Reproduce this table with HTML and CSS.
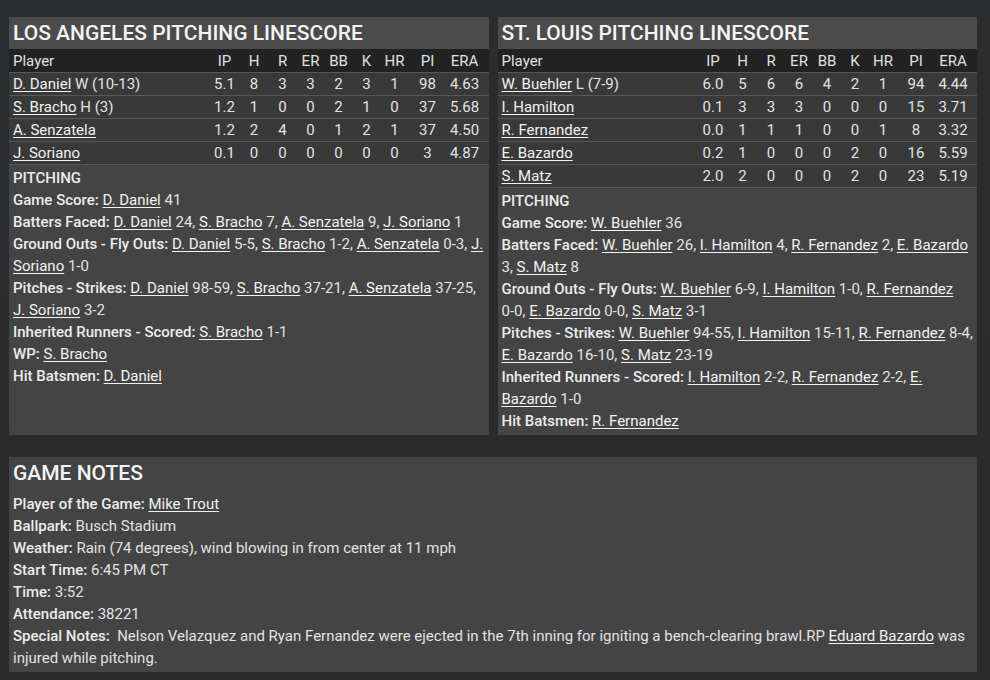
FILE: index.html
```html
<!DOCTYPE html>
<html>
<head>
<meta charset="utf-8">
<link rel="stylesheet" href="styles.css">
</head>
<body>
<div class="page">
  <div class="top-row">
    <section class="panel">
      <h2 class="panel-title">LOS ANGELES PITCHING LINESCORE</h2>
      <table class="linescore">
        <colgroup>
          <col><col class="c30"><col class="c29"><col class="c28"><col class="c28"><col class="c28"><col class="c28"><col class="c28"><col class="c38"><col class="c42">
        </colgroup>
        <thead>
          <tr><th class="player">Player</th><th>IP</th><th>H</th><th>R</th><th>ER</th><th>BB</th><th>K</th><th>HR</th><th>PI</th><th class="last">ERA</th></tr>
        </thead>
        <tbody>
          <tr><td class="player"><a href="#">D. Daniel</a> W (10-13)</td><td>5.1</td><td>8</td><td>3</td><td>3</td><td>2</td><td>3</td><td>1</td><td>98</td><td class="last">4.63</td></tr>
          <tr><td class="player"><a href="#">S. Bracho</a> H (3)</td><td>1.2</td><td>1</td><td>0</td><td>0</td><td>2</td><td>1</td><td>0</td><td>37</td><td class="last">5.68</td></tr>
          <tr><td class="player"><a href="#">A. Senzatela</a></td><td>1.2</td><td>2</td><td>4</td><td>0</td><td>1</td><td>2</td><td>1</td><td>37</td><td class="last">4.50</td></tr>
          <tr><td class="player"><a href="#">J. Soriano</a></td><td>0.1</td><td>0</td><td>0</td><td>0</td><td>0</td><td>0</td><td>0</td><td>3</td><td class="last">4.87</td></tr>
        </tbody>
      </table>
      <div class="notes">
        <div class="notes-head">PITCHING</div>
        <p><b>Game Score:</b> <a href="#">D. Daniel</a> 41</p>
        <p><b>Batters Faced:</b> <a href="#">D. Daniel</a> 24, <a href="#">S. Bracho</a> 7, <a href="#">A. Senzatela</a> 9, <a href="#">J. Soriano</a> 1</p>
        <p><b>Ground Outs - Fly Outs:</b> <a href="#">D. Daniel</a> <span class="n">5-5,</span> <a href="#">S. Bracho</a> <span class="n">1-2,</span> <a href="#">A. Senzatela</a> <span class="n">0-3,</span> <a href="#">J. Soriano</a> <span class="n">1-0</span></p>
        <p><b>Pitches - Strikes:</b> <a href="#">D. Daniel</a> <span class="n">98-59,</span> <a href="#">S. Bracho</a> <span class="n">37-21,</span> <a href="#">A. Senzatela</a> <span class="n">37-25,</span> <a href="#">J. Soriano</a> <span class="n">3-2</span></p>
        <p><b>Inherited Runners - Scored:</b> <a href="#">S. Bracho</a> <span class="n">1-1</span></p>
        <p><b>WP:</b> <a href="#">S. Bracho</a></p>
        <p><b>Hit Batsmen:</b> <a href="#">D. Daniel</a></p>
      </div>
    </section>
    <section class="panel">
      <h2 class="panel-title">ST. LOUIS PITCHING LINESCORE</h2>
      <table class="linescore">
        <colgroup>
          <col><col class="c30"><col class="c29"><col class="c28"><col class="c28"><col class="c28"><col class="c28"><col class="c28"><col class="c38"><col class="c42">
        </colgroup>
        <thead>
          <tr><th class="player">Player</th><th>IP</th><th>H</th><th>R</th><th>ER</th><th>BB</th><th>K</th><th>HR</th><th>PI</th><th class="last">ERA</th></tr>
        </thead>
        <tbody>
          <tr><td class="player"><a href="#">W. Buehler</a> L (7-9)</td><td>6.0</td><td>5</td><td>6</td><td>6</td><td>4</td><td>2</td><td>1</td><td>94</td><td class="last">4.44</td></tr>
          <tr><td class="player"><a href="#">I. Hamilton</a></td><td>0.1</td><td>3</td><td>3</td><td>3</td><td>0</td><td>0</td><td>0</td><td>15</td><td class="last">3.71</td></tr>
          <tr><td class="player"><a href="#">R. Fernandez</a></td><td>0.0</td><td>1</td><td>1</td><td>1</td><td>0</td><td>0</td><td>1</td><td>8</td><td class="last">3.32</td></tr>
          <tr><td class="player"><a href="#">E. Bazardo</a></td><td>0.2</td><td>1</td><td>0</td><td>0</td><td>0</td><td>2</td><td>0</td><td>16</td><td class="last">5.59</td></tr>
          <tr><td class="player"><a href="#">S. Matz</a></td><td>2.0</td><td>2</td><td>0</td><td>0</td><td>0</td><td>2</td><td>0</td><td>23</td><td class="last">5.19</td></tr>
        </tbody>
      </table>
      <div class="notes">
        <div class="notes-head">PITCHING</div>
        <p><b>Game Score:</b> <a href="#">W. Buehler</a> 36</p>
        <p><b>Batters Faced:</b> <a href="#">W. Buehler</a> 26, <a href="#">I. Hamilton</a> 4, <a href="#">R. Fernandez</a> 2, <a href="#">E. Bazardo</a> 3, <a href="#">S. Matz</a> 8</p>
        <p><b>Ground Outs - Fly Outs:</b> <a href="#">W. Buehler</a> <span class="n">6-9,</span> <a href="#">I. Hamilton</a> <span class="n">1-0,</span> <a href="#">R. Fernandez</a> <span class="n">0-0,</span> <a href="#">E. Bazardo</a> <span class="n">0-0,</span> <a href="#">S. Matz</a> <span class="n">3-1</span></p>
        <p><b>Pitches - Strikes:</b> <a href="#">W. Buehler</a> <span class="n">94-55,</span> <a href="#">I. Hamilton</a> <span class="n">15-11,</span> <a href="#">R. Fernandez</a> <span class="n">8-4,</span> <a href="#">E. Bazardo</a> <span class="n">16-10,</span> <a href="#">S. Matz</a> <span class="n">23-19</span></p>
        <p><b>Inherited Runners - Scored:</b> <a href="#">I. Hamilton</a> <span class="n">2-2,</span> <a href="#">R. Fernandez</a> <span class="n">2-2,</span> <a href="#">E. Bazardo</a> <span class="n">1-0</span></p>
        <p><b>Hit Batsmen:</b> <a href="#">R. Fernandez</a></p>
      </div>
    </section>
  </div>
  <section class="panel game-notes">
    <h2 class="notes-title">GAME NOTES</h2>
    <p><b>Player of the Game:</b> <a href="#">Mike Trout</a></p>
    <p><b>Ballpark:</b> Busch Stadium</p>
    <p><b>Weather:</b> Rain (74 degrees), wind blowing in from center at 11 mph</p>
    <p><b>Start Time:</b> 6:45 PM CT</p>
    <p><b>Time:</b> 3:52</p>
    <p><b>Attendance:</b> 38221</p>
    <p><b>Special Notes:</b>&nbsp; Nelson Velazquez and Ryan Fernandez were ejected in the 7th inning for igniting a bench-clearing brawl.RP <a href="#">Eduard Bazardo</a> was injured while pitching.</p>
  </section>
</div>
</body>
</html>
```

FILE: styles.css
```css
html, body {
  margin: 0;
  padding: 0;
}

body {
  background: linear-gradient(180deg, #2a2c2e 0%, #2b2b2c 60%, #2a2a2a 100%);
  font-family: Roboto, "Liberation Sans", sans-serif;
  font-size: 15px;
  color: #e2e2e2;
  width: 990px;
  height: 680px;
  overflow: hidden;
}

.page {
  padding: 17px 13px 0 9px;
  display: flex;
  flex-direction: column;
  gap: 22px;
}

.top-row {
  display: flex;
  gap: 9px;
  align-items: stretch;
}

.top-row .panel {
  flex: 1 1 0;
  min-width: 0;
}

.panel {
  background: #444444;
  padding-bottom: 3px;
}

.panel-title {
  margin: 0;
  height: 32px;
  line-height: 32px;
  padding: 0 4px;
  background: #4b4b4b;
  font-size: 21px;
  font-weight: 500;
  color: #f4f4f4;
  white-space: nowrap;
}

.linescore {
  width: 100%;
  border-collapse: collapse;
  table-layout: fixed;
}

.c28 { width: 28px; }
.c29 { width: 29px; }
.c30 { width: 30px; }
.c38 { width: 38px; }
.c42 { width: 42px; }

.linescore th,
.linescore td {
  height: 22px;
  padding: 0;
  text-align: center;
  font-weight: 400;
  line-height: 22px;
  white-space: nowrap;
}

.linescore thead tr {
  background: #222222;
}

.linescore thead th {
  height: 23px;
  color: #e0e0e0;
}

.linescore tbody tr {
  background: #393939;
  border-top: 1px solid #575757;
}

.linescore tbody tr:last-child {
  border-bottom: 1px solid #575757;
}

.linescore .player {
  text-align: left;
  padding-left: 4px;
}

.linescore .last {
  padding-right: 6px;
}

a {
  color: #f2f2f2;
  text-decoration: underline;
  text-underline-offset: 2px;
}

.n {
  white-space: nowrap;
}

.notes {
  padding: 2px 4px 0;
}

.notes-head {
  font-weight: 500;
  line-height: 22px;
  color: #ececec;
}

.notes p,
.game-notes p {
  margin: 0;
  line-height: 22px;
}

b {
  font-weight: 500;
  color: #ececec;
}

.game-notes {
  padding: 0 4px 3px;
}

.notes-title {
  margin: 0 0 4px;
  height: 32px;
  line-height: 32px;
  font-size: 21px;
  font-weight: 500;
  color: #f4f4f4;
}
```
